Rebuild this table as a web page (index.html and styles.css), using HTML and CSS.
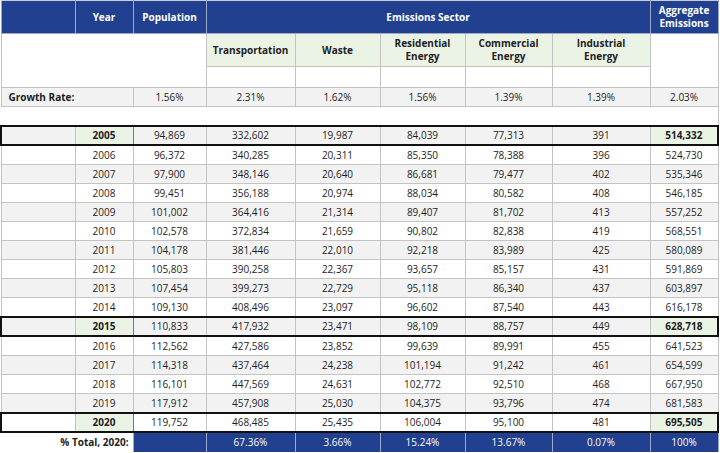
FILE: index.html
```html
<!DOCTYPE html>
<html>
<head>
<meta charset="utf-8">
<link rel="stylesheet" href="styles.css">
</head>
<body>
<table class="em">
  <colgroup>
    <col class="w74"><col class="w58"><col class="w73"><col class="w89"><col class="w85"><col class="w85"><col class="w87"><col class="w98"><col class="w68">
  </colgroup>
  <tr class="hdr">
    <th></th><th>Year</th><th>Population</th><th colspan="5">Emissions Sector</th><th>Aggregate<br>Emissions</th>
  </tr>
  <tr class="sub">
    <td class="blank" colspan="3" rowspan="2"></td>
    <th>Transportation</th><th>Waste</th><th>Residential<br>Energy</th><th>Commercial<br>Energy</th><th>Industrial<br>Energy</th>
    <td class="blank" rowspan="2"></td>
  </tr>
  <tr class="inp"><td></td><td></td><td></td><td></td><td></td></tr>
  <tr class="growth">
    <td class="lbl" colspan="2">Growth Rate:</td><td>1.56%</td><td>2.31%</td><td>1.62%</td><td>1.56%</td><td>1.39%</td><td>1.39%</td><td>2.03%</td>
  </tr>
  <tr class="gap"><td colspan="9"></td></tr>
  <tr class="row alt key"><td></td><td class="yr">2005</td><td>94,869</td><td>332,602</td><td>19,987</td><td>84,039</td><td>77,313</td><td>391</td><td class="agg">514,332</td></tr>
  <tr class="row"><td></td><td>2006</td><td>96,372</td><td>340,285</td><td>20,311</td><td>85,350</td><td>78,388</td><td>396</td><td>524,730</td></tr>
  <tr class="row alt"><td></td><td>2007</td><td>97,900</td><td>348,146</td><td>20,640</td><td>86,681</td><td>79,477</td><td>402</td><td>535,346</td></tr>
  <tr class="row"><td></td><td>2008</td><td>99,451</td><td>356,188</td><td>20,974</td><td>88,034</td><td>80,582</td><td>408</td><td>546,185</td></tr>
  <tr class="row alt"><td></td><td>2009</td><td>101,002</td><td>364,416</td><td>21,314</td><td>89,407</td><td>81,702</td><td>413</td><td>557,252</td></tr>
  <tr class="row"><td></td><td>2010</td><td>102,578</td><td>372,834</td><td>21,659</td><td>90,802</td><td>82,838</td><td>419</td><td>568,551</td></tr>
  <tr class="row alt"><td></td><td>2011</td><td>104,178</td><td>381,446</td><td>22,010</td><td>92,218</td><td>83,989</td><td>425</td><td>580,089</td></tr>
  <tr class="row"><td></td><td>2012</td><td>105,803</td><td>390,258</td><td>22,367</td><td>93,657</td><td>85,157</td><td>431</td><td>591,869</td></tr>
  <tr class="row alt"><td></td><td>2013</td><td>107,454</td><td>399,273</td><td>22,729</td><td>95,118</td><td>86,340</td><td>437</td><td>603,897</td></tr>
  <tr class="row"><td></td><td>2014</td><td>109,130</td><td>408,496</td><td>23,097</td><td>96,602</td><td>87,540</td><td>443</td><td>616,178</td></tr>
  <tr class="row alt key"><td></td><td class="yr">2015</td><td>110,833</td><td>417,932</td><td>23,471</td><td>98,109</td><td>88,757</td><td>449</td><td class="agg">628,718</td></tr>
  <tr class="row"><td></td><td>2016</td><td>112,562</td><td>427,586</td><td>23,852</td><td>99,639</td><td>89,991</td><td>455</td><td>641,523</td></tr>
  <tr class="row alt"><td></td><td>2017</td><td>114,318</td><td>437,464</td><td>24,238</td><td>101,194</td><td>91,242</td><td>461</td><td>654,599</td></tr>
  <tr class="row"><td></td><td>2018</td><td>116,101</td><td>447,569</td><td>24,631</td><td>102,772</td><td>92,510</td><td>468</td><td>667,950</td></tr>
  <tr class="row alt"><td></td><td>2019</td><td>117,912</td><td>457,908</td><td>25,030</td><td>104,375</td><td>93,796</td><td>474</td><td>681,583</td></tr>
  <tr class="row key"><td></td><td class="yr">2020</td><td>119,752</td><td>468,485</td><td>25,435</td><td>106,004</td><td>95,100</td><td>481</td><td class="agg">695,505</td></tr>
  <tr class="total">
    <td class="tl" colspan="2">% Total, 2020:</td><td></td><td>67.36%</td><td>3.66%</td><td>15.24%</td><td>13.67%</td><td>0.07%</td><td>100%</td>
  </tr>
</table>
</body>
</html>
```

FILE: styles.css
```css
html, body {
  margin: 0;
  padding: 0;
  background: #ffffff;
}

.em {
  border-collapse: collapse;
  table-layout: fixed;
  width: 717px;
  font-family: "Open Sans", "Noto Sans", sans-serif;
  font-size: 10px;
  color: #1e1e1e;
}

.w74 { width: 74px; }
.w58 { width: 58px; }
.w73 { width: 73px; }
.w89 { width: 89px; }
.w85 { width: 85px; }
.w87 { width: 87px; }
.w98 { width: 98px; }
.w68 { width: 68px; }

.em td, .em th {
  padding: 0;
  text-align: center;
  vertical-align: middle;
  border: 1px solid #c3c3c3;
  line-height: 13px;
}

.hdr th {
  height: 32px;
  background: #21408f;
  color: #ffffff;
  font-weight: 700;
  border: 1px solid #9ea9c9;
  border-top-color: #c7ccd9;
}

.sub th {
  height: 32px;
  background: #ebf3e5;
  font-weight: 700;
  color: #222;
}

.sub .blank { background: #fff; }

.inp td {
  height: 20px;
  background: #fff;
}

.growth td {
  height: 18px;
  background: #f2f2f2;
}

.growth .lbl {
  text-align: left;
  padding-left: 7px;
  font-weight: 700;
}

.gap td {
  height: 18px;
  border-left: none;
  border-bottom: none;
}

.row td {
  height: 18px;
  background: #ffffff;
}

.row.alt td { background: #f2f2f2; }

.row.key td {
  height: 17px;
  border-top: 2px solid #111;
  border-bottom: 2px solid #111;
}

.row.key td:first-child { border-left: 2px solid #111; }
.row.key td:last-child { border-right: 2px solid #111; }

.row.key .yr,
.row.key .agg {
  background: #ebf3e5;
  font-weight: 700;
}

.row.key .yr {
  border-left: 1px solid #4b9b3c;
  border-right: 1px solid #4b9b3c;
}

.row.key .agg { border-left: 1px solid #4b9b3c; }

.total td {
  height: 19px;
  background: #21408f;
  color: #ffffff;
  border: 1px solid #9ea9c9;
  border-bottom: none;
}

.total .tl {
  background: #ffffff;
  color: #222;
  font-weight: 700;
  text-align: right;
  padding-right: 4px;
  border: none;
}
```
